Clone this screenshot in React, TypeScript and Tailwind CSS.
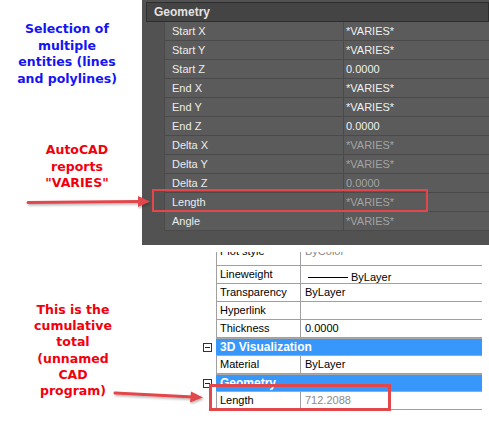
import React from 'react';

interface DarkRow {
  name: string;
  value: string;
  dim?: boolean;
}

const darkRows: DarkRow[] = [
  { name: 'Start X', value: '*VARIES*' },
  { name: 'Start Y', value: '*VARIES*' },
  { name: 'Start Z', value: '0.0000' },
  { name: 'End X', value: '*VARIES*' },
  { name: 'End Y', value: '*VARIES*' },
  { name: 'End Z', value: '0.0000' },
  { name: 'Delta X', value: '*VARIES*', dim: true },
  { name: 'Delta Y', value: '*VARIES*', dim: true },
  { name: 'Delta Z', value: '0.0000', dim: true },
  { name: 'Length', value: '*VARIES*', dim: true },
  { name: 'Angle', value: '*VARIES*', dim: true },
];

function Minus() {
  return (
    <div className="w-[9px] h-[9px] border border-[#333] bg-white flex items-center justify-center">
      <div className="w-[5px] h-px bg-[#222]" />
    </div>
  );
}

function LightRow({ name, children }: { name: string; children?: React.ReactNode }) {
  return (
    <div className="flex h-[18px]">
      <div className="w-[16px]" />
      <div className="flex flex-1 border-l border-b border-[#a0a0a0]">
        <div className="w-[84px] border-r border-[#a0a0a0] pl-[3px] leading-[17px]">{name}</div>
        <div className="flex-1 pl-[4px] leading-[17px]">{children}</div>
      </div>
    </div>
  );
}

function BlueHeader({ title }: { title: string }) {
  return (
    <div className="flex h-[18px]">
      <div className="w-[16px] flex items-center pl-[3px]">
        <Minus />
      </div>
      <div className="flex-1 bg-[#3797fb] border-y border-[#a8a8a8] text-white font-bold pl-[4px] leading-[16px] text-[12px]">
        {title}
      </div>
    </div>
  );
}

export default function App() {
  return (
    <div className="relative w-[489px] h-[422px] bg-white overflow-hidden font-['Liberation_Sans',Arial,sans-serif]">
      {/* top: AutoCAD properties */}
      <div className="flex h-[245px]">
        <div className="w-[142px] font-['DejaVu_Sans',Verdana,sans-serif] font-bold text-[12.5px] leading-[16.5px] text-center">
          <div className="pt-[21px] pr-[8px] text-[#1414f5]">
            Selection of
            <br />
            multiple
            <br />
            entities (lines
            <br />
            and polylines)
          </div>
          <div className="pt-[55px] pl-[12px] text-[#f2000c]">
            AutoCAD
            <br />
            reports
            <br />
            "VARIES"
          </div>
        </div>
        <div className="flex-1 bg-[#525252] pt-[2px] text-[11px]">
          <div className="ml-[4px] h-[20px] bg-[#444444] border border-[#2e2e2e] pl-[7px] text-[12px] font-bold text-[#e2e2e2] leading-[18px]">
            Geometry
          </div>
          <div className="ml-[22px]">
            {darkRows.map((r) => (
              <div key={r.name} className="flex h-[19px] bg-[#5b5b5b] border-b border-l border-[#4a4a4a]">
                <div className="w-[179px] border-r border-[#4a4a4a] pl-[7px] text-[#ececec] leading-[18px]">{r.name}</div>
                <div className={`flex-1 pl-[2px] leading-[18px] ${r.dim ? 'text-[#a3a3a3]' : 'text-[#f0f0f0]'}`}>
                  {r.value}
                </div>
              </div>
            ))}
          </div>
        </div>
      </div>

      {/* bottom: other CAD program */}
      <div className="flex">
        <div className="w-[200px] pt-[57px] pr-[54px] text-center font-['DejaVu_Sans',Verdana,sans-serif] font-bold text-[12.5px] leading-[16.2px] text-[#f2000c]">
          This is the
          <br />
          cumulative
          <br />
          total
          <br />
          (unnamed
          <br />
          CAD
          <br />
          program)
        </div>
        <div className="w-[282px] pt-[7px] text-[11px] text-black">
          {/* scrolled-off row, only its lower edge shows */}
          <div className="flex h-[14px]">
            <div className="w-[16px]" />
            <div className="flex flex-1 border-l border-b border-[#a0a0a0] overflow-hidden">
              <div className="w-[84px] border-r border-[#a0a0a0] pl-[3px] leading-[17px] -mt-[9px]">Plot style</div>
              <div className="flex-1 pl-[4px] leading-[17px] -mt-[9px] text-[#888]">ByColor</div>
            </div>
          </div>
          <LightRow name="Lineweight">
            <span className="inline-flex items-center gap-[3px]">
              <span className="inline-block w-[40px] h-px bg-black ml-[3px]" />
              ByLayer
            </span>
          </LightRow>
          <LightRow name="Transparency">ByLayer</LightRow>
          <LightRow name="Hyperlink" />
          <LightRow name="Thickness">0.0000</LightRow>
          <BlueHeader title="3D Visualization" />
          <LightRow name="Material">ByLayer</LightRow>
          <BlueHeader title="Geometry" />
          <LightRow name="Length">
            <span className="text-[#8a8a8a]">712.2088</span>
          </LightRow>
        </div>
      </div>

      {/* callouts */}
      <div className="absolute left-[152px] top-[189px] w-[276px] h-[23px] border-2 border-[#e2474b]" />
      <div className="absolute left-[209px] top-[384px] w-[182px] h-[27px] border-[3px] border-[#e2474b]" />
      <svg className="absolute inset-0 pointer-events-none" width="489" height="422" viewBox="0 0 489 422">
        <defs>
          <filter id="sh" x="-10%" y="-50%" width="120%" height="200%">
            <feDropShadow dx="1" dy="1.5" stdDeviation="1" floodColor="#000" floodOpacity="0.3" />
          </filter>
        </defs>
        <g filter="url(#sh)" fill="#e2474b" stroke="#e2474b">
          <line x1="28" y1="202.5" x2="140" y2="201.5" strokeWidth="3" strokeLinecap="round" />
          <polygon points="138,196 150,201.5 138,207" stroke="none" />
          <line x1="115" y1="393" x2="193" y2="397" strokeWidth="3" strokeLinecap="round" />
          <polygon points="191,391.5 203,397.5 190,402.5" stroke="none" />
        </g>
      </svg>
    </div>
  );
}
